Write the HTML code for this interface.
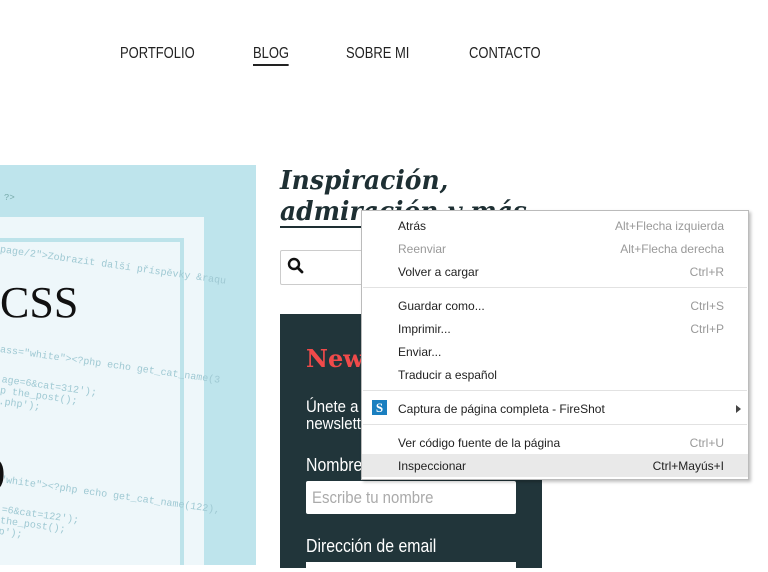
<!DOCTYPE html>
<html><head><meta charset="utf-8"><style>
body{margin:0;width:768px;height:568px;overflow:hidden;background:#fff;font-family:"Liberation Sans",sans-serif;position:relative}
.a{position:absolute}
.nav{top:45px;font-size:16px;color:#222;transform:scaleX(.81);transform-origin:left}
.n{transform:scaleX(.88);transform-origin:left;white-space:nowrap}
.code{font-family:"Liberation Mono",monospace;font-size:10px;color:#9fc9d3;transform:rotate(8deg);transform-origin:left;white-space:nowrap}
.m{position:absolute;left:36px;color:#222;font-family:"Liberation Sans",sans-serif;font-size:12px}
.k{position:absolute;right:24px;color:#999;font-family:"Liberation Sans",sans-serif;font-size:12px}
.sep{position:absolute;left:1px;right:1px;height:1px;background:#e2e2e2}
</style></head><body>
<div class="a nav" style="left:120px">PORTFOLIO</div>
<div class="a nav" style="left:253px;border-bottom:2px solid #222;padding-bottom:1px">BLOG</div>
<div class="a nav" style="left:346px">SOBRE MI</div>
<div class="a nav" style="left:469px">CONTACTO</div>

<div class="a" style="left:0;top:165px;width:256px;height:400px;background:#bee4ec;overflow:hidden">
 <div class="a" style="left:0;top:52px;width:204px;height:348px;background:#eef7fa"></div>
 <div class="a" style="left:0;top:73px;width:180px;height:327px;border-top:4px solid #bde3ea;border-right:4px solid #bde3ea"></div>
 <div class="a" style="left:4px;top:28px;font-size:9px;color:#7aa;font-family:'Liberation Mono',monospace">?&gt;</div>
 <div class="a code" style="left:0;top:80px">page/2"&gt;Zobrazit další příspěvky &amp;raqu</div>
 <div class="a code" style="left:0;top:180px">ass="white"&gt;&lt;?php echo get_cat_name(3</div>
 <div class="a code" style="left:0;top:210px">age=6&amp;cat=312');<br>p  the_post();<br>.php');</div>
 <div class="a code" style="left:0;top:310px">"white"&gt;&lt;?php echo get_cat_name(122),</div>
 <div class="a code" style="left:0;top:340px">=6&amp;cat=122');<br>the_post();<br>p');</div>
 <div class="a" style="left:0;top:112px;font-family:'Liberation Serif',serif;font-size:44px;color:#111">CSS</div>
 <div class="a" style="left:-8px;top:282px;font-family:'Liberation Serif',serif;font-size:40px;color:#111">)</div>
</div>

<div class="a" style="left:280px;top:166px;font-family:'DejaVu Serif','Liberation Serif',serif;font-style:italic;font-weight:bold;font-size:26px;line-height:31px;color:#1e2f33;transform:scaleX(.96);transform-origin:left">Inspiración,<br>admiración y más</div>
<div class="a" style="left:280px;top:226px;width:250px;height:2px;background:#1e2f33"></div>
<div class="a" style="left:280px;top:250px;width:260px;height:33px;border:1px solid #ccc;border-radius:2px"></div>
<svg class="a" style="left:287px;top:257px" width="18" height="18" viewBox="0 0 18 18"><circle cx="7" cy="7" r="5" fill="none" stroke="#111" stroke-width="2.4"/><path d="M10.5 10.5L15 15" stroke="#111" stroke-width="2.8" stroke-linecap="round"/></svg>

<div class="a" style="left:280px;top:314px;width:262px;height:254px;background:#21353a">
 <div class="a" style="left:26px;top:30px;font-family:'DejaVu Serif',serif;font-weight:bold;font-size:24px;color:#f04a4a">Newsletter</div>
 <div class="a n" style="left:26px;top:84px;color:#fff;font-size:17px;line-height:17px">Únete a la<br>newsletter</div>
 <div class="a n" style="left:26px;top:141px;color:#fff;font-size:18px">Nombre</div>
 <div class="a" style="left:26px;top:167px;width:210px;height:33px;background:#fff;border-radius:2px;box-sizing:border-box"><div class="a n" style="left:6px;top:7px;color:#aaa;font-size:17px">Escribe tu nombre</div></div>
 <div class="a n" style="left:26px;top:222px;color:#fff;font-size:18px">Dirección de email</div>
 <div class="a" style="left:26px;top:248px;width:210px;height:10px;background:#fff"></div>
</div>

<div class="a" style="left:361px;top:210px;width:386px;height:268px;background:#fff;border:1px solid #bbb;box-shadow:2px 2px 3px rgba(0,0,0,.25)">
 <div class="m" style="top:8px">Atrás</div><div class="k" style="top:8px">Alt+Flecha izquierda</div>
 <div class="m" style="top:31px;color:#999">Reenviar</div><div class="k" style="top:31px">Alt+Flecha derecha</div>
 <div class="m" style="top:54px">Volver a cargar</div><div class="k" style="top:54px">Ctrl+R</div>
 <div class="sep" style="top:76px"></div>
 <div class="m" style="top:88px">Guardar como...</div><div class="k" style="top:88px">Ctrl+S</div>
 <div class="m" style="top:111px">Imprimir...</div><div class="k" style="top:111px">Ctrl+P</div>
 <div class="m" style="top:134px">Enviar...</div>
 <div class="m" style="top:157px">Traducir a español</div>
 <div class="sep" style="top:179px"></div>
 <div class="a" style="left:10px;top:189px;width:15px;height:15px;background:#1a7fc0;color:#fff;font:bold 13px 'Liberation Serif',serif;text-align:center;line-height:15px">S</div>
 <div class="m" style="top:191px">Captura de página completa - FireShot</div>
 <div class="a" style="right:7px;top:194px;width:0;height:0;border-left:5px solid #444;border-top:4px solid transparent;border-bottom:4px solid transparent"></div>
 <div class="sep" style="top:213px"></div>
 <div class="m" style="top:225px">Ver código fuente de la página</div><div class="k" style="top:225px">Ctrl+U</div>
 <div class="a" style="left:0;right:0;top:243px;height:23px;background:#e9e9e9"></div>
 <div class="m" style="top:248px">Inspeccionar</div><div class="k" style="top:248px;color:#222">Ctrl+Mayús+I</div>
</div>
</body></html>
